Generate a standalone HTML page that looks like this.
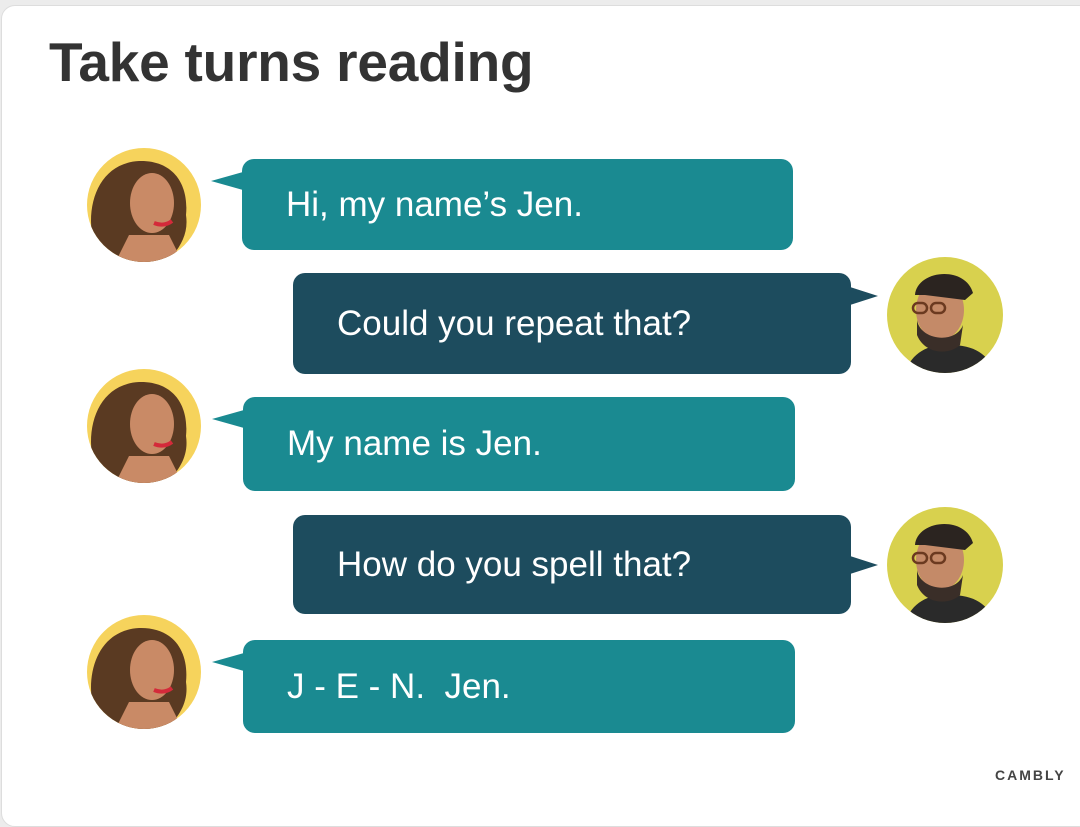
<!DOCTYPE html>
<html><head><meta charset="utf-8"><style>
body{margin:0;width:1080px;height:812px;background:#ececec;overflow:hidden;font-family:"Liberation Sans",Arial,sans-serif;position:relative}
.card{position:absolute;left:1px;top:5px;width:1090px;height:820px;background:#fff;border:1px solid #ddd;border-radius:14px}
h1{position:absolute;left:49px;top:30px;margin:0;font-size:55px;font-weight:bold;color:#333;letter-spacing:-0.2px}
.b{position:absolute;border-radius:12px;color:#fff;font-size:35px;display:flex;align-items:center;box-sizing:border-box}
.l{background:#1a8a91;padding-left:44px}
.r{background:#1d4c5e;padding-left:44px}
.tl{position:absolute;width:0;height:0;border-top:9px solid transparent;border-bottom:9px solid transparent;border-right:32px solid #1a8a91}
.tr{position:absolute;width:0;height:0;border-top:9px solid transparent;border-bottom:9px solid transparent;border-left:28px solid #1d4c5e}
svg{position:absolute}
.cam{position:absolute;left:995px;top:767px;font-size:14px;font-weight:bold;letter-spacing:2px;color:#444}
</style></head><body>
<div class="card"></div>
<h1>Take turns reading</h1>

<svg width="0" height="0"><defs>
<g id="w"><circle cx="0" cy="0" r="57" fill="#f6d35c"/>
<clipPath id="cw"><circle cx="0" cy="0" r="57"/></clipPath>
<g clip-path="url(#cw)">
<path d="M-50 40 C-60 0 -45 -42 -5 -44 C30 -45 45 -20 42 10 C45 30 35 45 20 60 L-40 60 Z" fill="#5a3a22"/>
<ellipse cx="8" cy="-2" rx="22" ry="30" fill="#c98a66"/>
<path d="M-15 30 L25 30 L40 60 L-30 60 Z" fill="#c98a66"/>
<path d="M10 18 Q20 22 28 16" stroke="#d42a3a" stroke-width="4" fill="none"/>
</g></g>
<g id="m"><circle cx="0" cy="0" r="58" fill="#d8d14e"/>
<clipPath id="cm"><circle cx="0" cy="0" r="58"/></clipPath>
<g clip-path="url(#cm)">
<path d="M-40 60 C-35 35 -10 28 5 30 C30 30 45 40 50 60 Z" fill="#2a2a2a"/>
<ellipse cx="-5" cy="-5" rx="24" ry="30" fill="#c48a68"/>
<path d="M-30 -20 C-28 -45 20 -50 28 -22 L20 -15 L-20 -20 Z" fill="#2b2420"/>
<path d="M-28 5 C-25 25 10 30 18 10 L15 30 C5 40 -20 40 -28 20 Z" fill="#3a2e28"/>
<rect x="-32" y="-12" width="14" height="10" rx="5" fill="none" stroke="#6b3a20" stroke-width="2.5"/>
<rect x="-14" y="-12" width="14" height="10" rx="5" fill="none" stroke="#6b3a20" stroke-width="2.5"/>
</g></g>
</defs></svg>

<svg width="1080" height="812" style="left:0;top:0">
<use href="#w" x="144" y="205"/>
<use href="#m" x="945" y="315"/>
<use href="#w" x="144" y="426"/>
<use href="#m" x="945" y="565"/>
<use href="#w" x="144" y="672"/>
</svg>

<div class="tl" style="left:211px;top:172px"></div>
<div class="b l" style="left:242px;top:159px;width:551px;height:91px">Hi, my name’s Jen.</div>

<div class="tr" style="left:850px;top:287px"></div>
<div class="b r" style="left:293px;top:273px;width:558px;height:101px">Could you repeat that?</div>

<div class="tl" style="left:212px;top:410px"></div>
<div class="b l" style="left:243px;top:397px;width:552px;height:94px">My name is Jen.</div>

<div class="tr" style="left:850px;top:556px"></div>
<div class="b r" style="left:293px;top:515px;width:558px;height:99px">How do you spell that?</div>

<div class="tl" style="left:212px;top:653px"></div>
<div class="b l" style="left:243px;top:640px;width:552px;height:93px">J - E - N.&nbsp; Jen.</div>

<div class="cam">CAMBLY</div>
</body></html>
